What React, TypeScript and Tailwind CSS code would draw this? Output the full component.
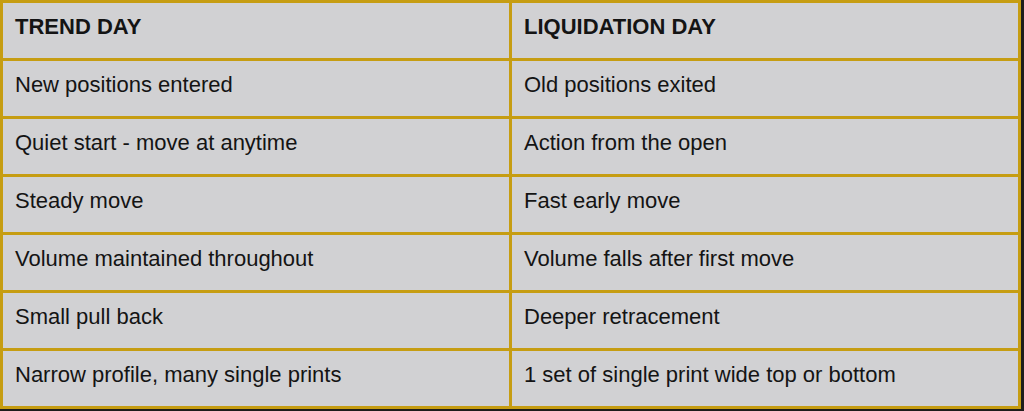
import React from 'react';

const rows: [string, string][] = [
  ['TREND DAY', 'LIQUIDATION DAY'],
  ['New positions entered', 'Old positions exited'],
  ['Quiet start - move at anytime', 'Action from the open'],
  ['Steady move', 'Fast early move'],
  ['Volume maintained throughout', 'Volume falls after first move'],
  ['Small pull back', 'Deeper retracement'],
  ['Narrow profile, many single prints', '1 set of single print wide top or bottom'],
];

const App: React.FC = () => {
  return (
    <div className="w-[1024px] h-[411px] bg-[#1e1d1b] overflow-hidden" style={{ fontFamily: '"Liberation Sans", Arial, sans-serif' }}>
      <div className="w-[1021px] grid grid-cols-2 gap-[3px] p-[3px] bg-[#c69d12]">
        {rows.map((row, i) =>
          row.map((cell, j) => (
            <div
              key={`${i}-${j}`}
              className={`h-[55px] bg-[#d1d1d3] px-3 pt-[13px] leading-[22px] text-[22px] text-[#141414] ${
                i === 0 ? 'font-bold' : ''
              }`}
            >
              {cell}
            </div>
          ))
        )}
      </div>
    </div>
  );
};

export default App;
